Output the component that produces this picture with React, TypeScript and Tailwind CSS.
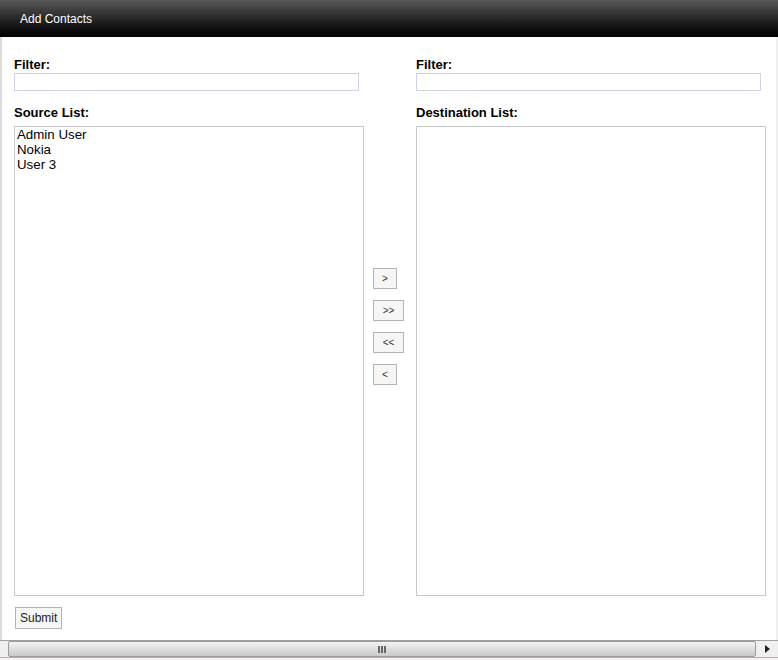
import { useState } from 'react'

const SOURCE = ['Admin User', 'Nokia', 'User 3']

const MOVE_BUTTONS = [
  { label: '>', w: 'w-[24px]' },
  { label: '>>', w: 'w-[31px]' },
  { label: '<<', w: 'w-[31px]' },
  { label: '<', w: 'w-[24px]' },
]

function ListColumn({ title, items }: { title: string; items: string[] }) {
  const [filter, setFilter] = useState('')
  return (
    <div className="flex w-[350px] flex-col">
      <label className="h-[16px] text-[13px] font-bold leading-[16px] text-black">Filter:</label>
      <input
        value={filter}
        onChange={(e) => setFilter(e.target.value)}
        className="h-[18px] w-[345px] border border-[#cfd3e6] bg-white px-1 text-[12px] outline-none"
      />
      <label className="mt-[14px] h-[16px] text-[13px] font-bold leading-[16px] text-black">{title}</label>
      <div className="mt-[5px] h-[470px] w-[350px] border border-[#c8c8c8] bg-white px-[2px]">
        {items
          .filter((i) => i.toLowerCase().includes(filter.toLowerCase()))
          .map((item) => (
            <div key={item} className="h-[15px] text-[13.3px] leading-[15px] text-black">
              {item}
            </div>
          ))}
      </div>
    </div>
  )
}

export default function App() {
  return (
    <div className="h-[660px] w-[778px] overflow-hidden bg-white font-['Liberation_Sans',Arial,sans-serif]">
      {/* Header */}
      <div className="flex h-[37px] items-center bg-gradient-to-b from-[#5a5a5a] to-[#020202] pl-[20px]">
        <span className="text-[12px] text-white">Add Contacts</span>
      </div>

      {/* Body */}
      <div className="flex h-[603px] flex-col border-l-2 border-r-2 border-l-[#dcdcdc] border-r-[#f0f0f0] pl-[12px] pt-[20px]">
        <div className="flex">
          <ListColumn title="Source List:" items={SOURCE} />
          <div className="flex w-[52px] flex-col gap-[11px] pl-[9px] pt-[211px]">
            {MOVE_BUTTONS.map((b) => (
              <button
                key={b.label}
                className={`${b.w} h-[21px] border border-[#b4b4b4] bg-[#f6f6f6] text-[10px] leading-none text-[#333]`}
              >
                {b.label}
              </button>
            ))}
          </div>
          <ListColumn title="Destination List:" items={[]} />
        </div>
        <div className="mt-[9px] pl-[1px]">
          <button className="h-[22px] border border-[#b4b4b4] bg-[#f6f6f6] px-[4px] text-[12px] text-[#222]">
            Submit
          </button>
        </div>
      </div>

      {/* Horizontal scrollbar */}
      <div className="flex h-[17px] items-stretch border-t border-[#a0a0a0] bg-[#f0f0f0]">
        <div className="w-[8px]" />
        <div className="flex flex-1 items-center justify-center rounded-[2px] border border-[#9a9a9a] bg-gradient-to-b from-[#f4f4f4] to-[#c9c9c9]">
          <div className="flex gap-[1px]">
            <span className="h-[7px] w-[2px] bg-[#666]" />
            <span className="h-[7px] w-[2px] bg-[#666]" />
            <span className="h-[7px] w-[2px] bg-[#666]" />
          </div>
        </div>
        <div className="flex w-[22px] items-center justify-center">
          <svg width="5" height="8" viewBox="0 0 5 8">
            <path d="M0 0 L5 4 L0 8 Z" fill="#222" />
          </svg>
        </div>
      </div>
      <div className="h-[3px] border-t border-[#b0b0b0] bg-[#f7f2f4]" />
    </div>
  )
}
